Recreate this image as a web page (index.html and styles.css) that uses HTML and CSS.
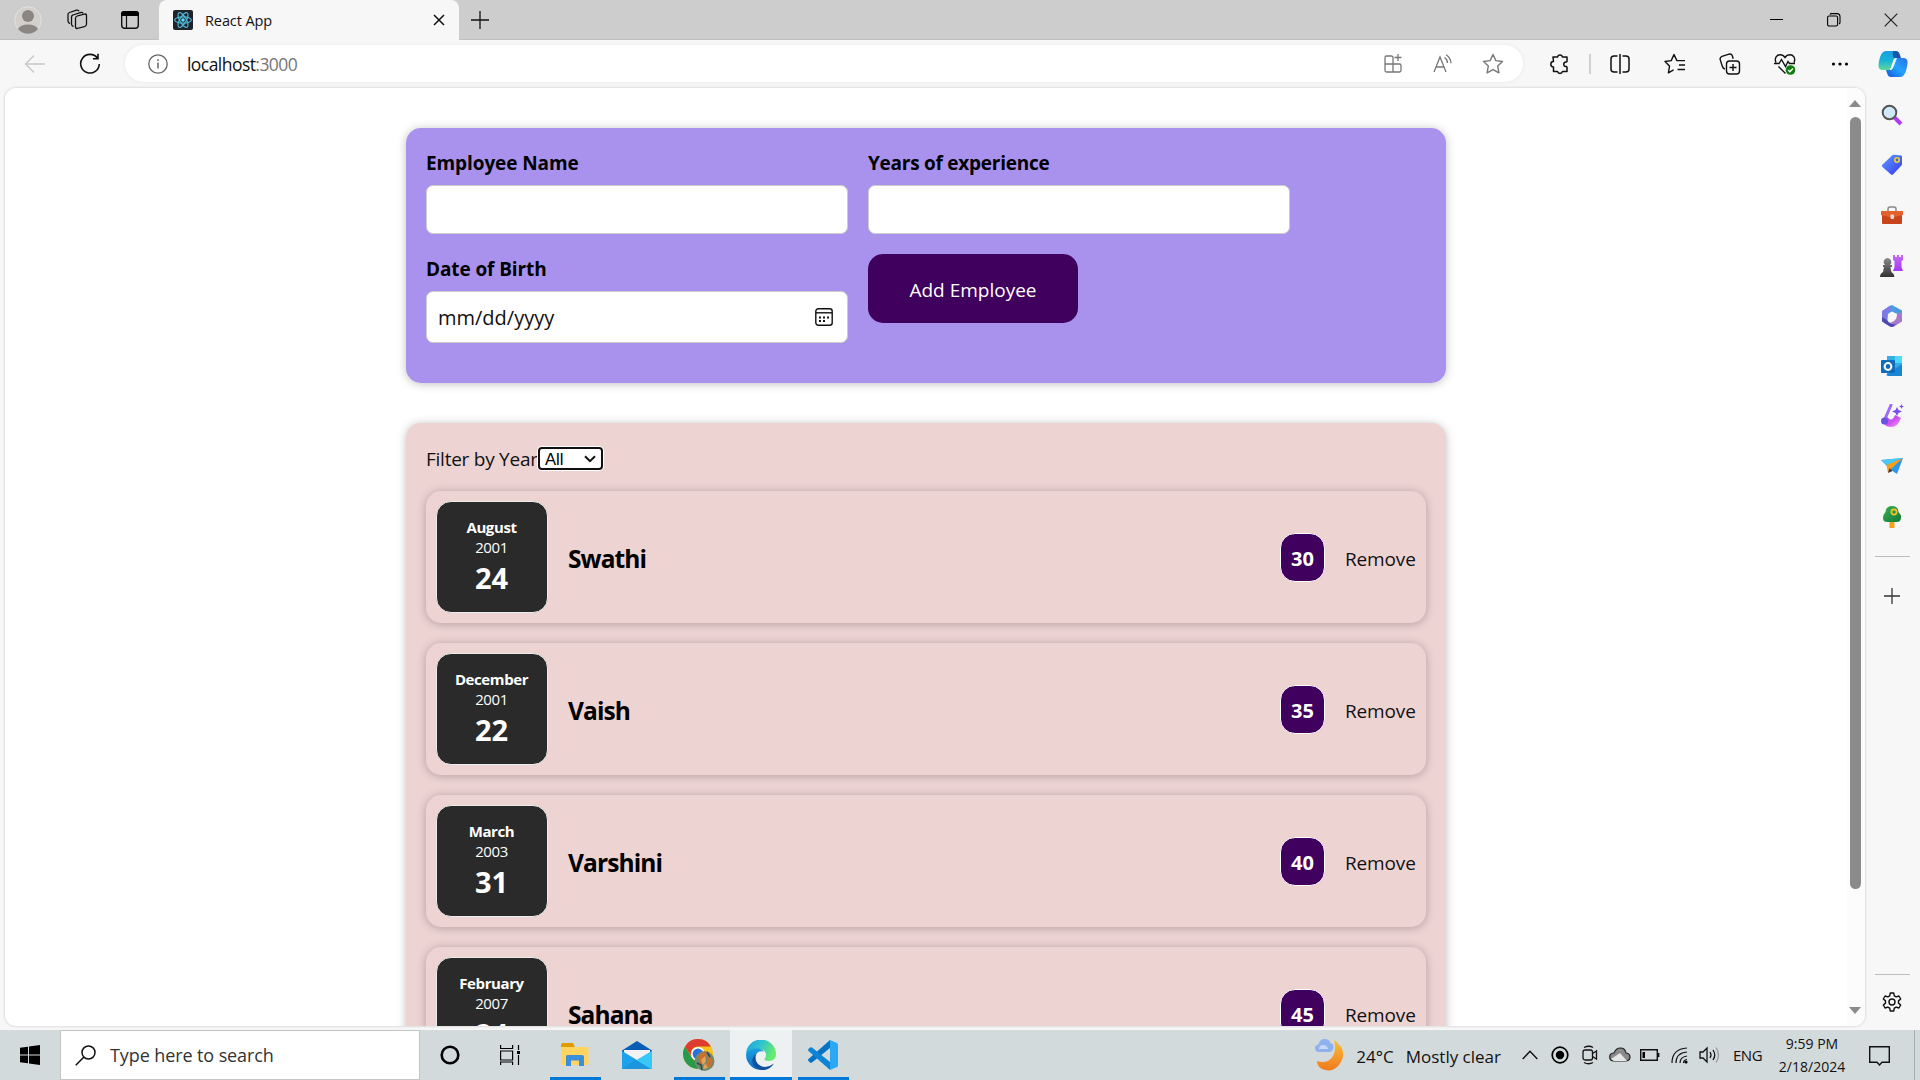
FILE: index.html
```html
<!DOCTYPE html>
<html lang="en">
<head>
<meta charset="utf-8">
<title>React App</title>
<link rel="stylesheet" href="styles.css">
</head>
<body>
<svg width="0" height="0" class="defs">
  <defs>
    <linearGradient id="copA" x1="0" y1="0" x2="0" y2="1"><stop offset="0" stop-color="#1b9de2"/><stop offset=".5" stop-color="#17b3d8"/><stop offset="1" stop-color="#5fd99a"/></linearGradient>
    <linearGradient id="copB" x1="1" y1="0" x2="0" y2="1"><stop offset="0" stop-color="#2a6fe0"/><stop offset=".5" stop-color="#22a4ff"/><stop offset="1" stop-color="#1552d8"/></linearGradient>
    <linearGradient id="tag" x1="0" y1="0" x2="1" y2="1"><stop offset="0" stop-color="#5aa2ff"/><stop offset="1" stop-color="#3a35f0"/></linearGradient>
    <linearGradient id="rook" x1="0" y1="0" x2="0" y2="1"><stop offset="0" stop-color="#c86bf5"/><stop offset="1" stop-color="#a43af5"/></linearGradient>
    <linearGradient id="pawn" x1="0" y1="0" x2="0" y2="1"><stop offset="0" stop-color="#8a8a8a"/><stop offset="1" stop-color="#333"/></linearGradient>
    <linearGradient id="drop" x1="0" y1="0" x2="1" y2="1"><stop offset="0" stop-color="#8a5cf5"/><stop offset=".5" stop-color="#cf4df0"/><stop offset="1" stop-color="#f0a5f5"/></linearGradient>
    <linearGradient id="moon" x1="0" y1="0" x2="0" y2="1"><stop offset="0" stop-color="#f8c13a"/><stop offset="1" stop-color="#f07a1e"/></linearGradient>
    <linearGradient id="edgeT" x1="0" y1="0" x2="1" y2=".4"><stop offset="0" stop-color="#1b9de2"/><stop offset=".5" stop-color="#2fc3d0"/><stop offset="1" stop-color="#66eb6e"/></linearGradient>
    <linearGradient id="edgeL" x1="0" y1="0" x2="0" y2="1"><stop offset="0" stop-color="#1aa0e0"/><stop offset="1" stop-color="#1169c4"/></linearGradient>
    <linearGradient id="tree" x1="0" y1="0" x2="1" y2="1"><stop offset="0" stop-color="#3fae4d"/><stop offset="1" stop-color="#0d7a3a"/></linearGradient>
  </defs>
</svg>

<header class="titlebar">
  <div class="tb-left">
    <span class="cell c56"><svg width="28" height="28"><circle cx="14" cy="14" r="13.2" fill="#d3d0cc" stroke="#e4e2de"/><circle cx="14" cy="10" r="6" fill="#8b8682"/><path d="M4 23a10.5 6.500 0 0 1 20 0 13 13 0 0 1-20 0z" fill="#8b8682"/></svg></span>
    <span class="cell c42"><svg width="24" height="24" fill="none" stroke="#111" stroke-width="1.300"><rect x="10.500" y="7" width="11" height="12.500" rx="2" transform="skewY(-14) translate(0 4)"/><path d="M8.500 18.500Q6.500 18 6.500 16V9Q6.500 7.400 8 7l8-2.500q1.700-.4 2.200 1M5 15.500Q3 15 3 13V6.500Q3 5 4.500 4.500l7-2.300q2-.5 2.500 1"/></svg></span>
    <span class="cell c64"><svg width="20" height="20"><rect x="1.700" y="1.700" width="16.600" height="16.600" rx="3" fill="none" stroke="#111" stroke-width="1.400"/><path d="M1 6V4a3 3 0 0 1 3-3h12a3 3 0 0 1 3 3v2z" fill="#000"/><path d="M6.500 6v12" stroke="#111" stroke-width="1.200"/></svg></span>
  </div>
  <div class="tab">
    <svg class="favicon" width="20" height="20"><rect width="20" height="20" rx="2" fill="#20232a"/><g fill="none" stroke="#4fb6d3" stroke-width="1.200"><ellipse cx="10" cy="10" rx="8.300" ry="3.200"/><ellipse cx="10" cy="10" rx="8.300" ry="3.200" transform="rotate(60 10 10)"/><ellipse cx="10" cy="10" rx="8.300" ry="3.200" transform="rotate(120 10 10)"/></g><circle cx="10" cy="10" r="1.800" fill="#61dafb"/></svg>
    <span class="tab-title">React App</span>
    <svg class="tab-close" width="12" height="12" stroke="#111" stroke-width="1.500"><path d="M1 1l10 10M11 1L1 11"/></svg>
  </div>
  <span class="cell c42"><svg width="18" height="18" stroke="#111" stroke-width="1.300"><path d="M9 0v18M0 9h18"/></svg></span>
  <div class="grow"></div>
  <div class="window-buttons">
  <span class="cell c57"><svg width="14" height="14"><path d="M0 6.500h13" stroke="#000"/></svg></span>
  <span class="cell c57"><svg width="14" height="14" fill="none" stroke="#000" stroke-width="1.100"><rect x=".6" y="3" width="10" height="10" rx="1.500"/><path d="M3 1.500Q3.300.6 4.500.6h5.500q3 0 3 3V9.500q0 1-1 1.500"/></svg></span>
  <span class="cell c57"><svg width="14" height="14" stroke="#222" stroke-width="1.200"><path d="M.7.700l12.600 12.600M13.300.7L.7 13.300"/></svg></span>
  </div>
</header>

<nav class="toolbar">
  <span class="cell c70"><svg width="22" height="20" fill="none" stroke="#c8c8c8" stroke-width="1.300"><path d="M21 10H1.500M10 1.500L1.500 10l8.500 8.500"/></svg></span>
  <span class="cell c40"><svg width="22" height="22" fill="none" stroke="#111" stroke-width="1.600"><path d="M18.500 5.200A9.300 9.300 0 1 0 20.300 11M19 .8v5h-5"/></svg></span>
  <div class="address">
    <svg class="info" width="20" height="20" fill="none" stroke="#666"><circle cx="10" cy="10" r="9.200" stroke-width="1.300"/><path d="M10 8.500v6M10 5.200v1.700" stroke-width="1.500"/></svg>
    <span class="url">localhost<span class="port">:3000</span></span>
    <div class="grow"></div>
    <span class="cell c50"><svg width="20" height="20" fill="none" stroke="#777" stroke-width="1.300"><path d="M10 10V3.500a1.500 1.500 0 0 0-1.500-1.500h-5A1.500 1.500 0 0 0 2 3.500v13A1.500 1.500 0 0 0 3.500 18h13a1.500 1.500 0 0 0 1.500-1.500v-5a1.500 1.500 0 0 0-1.500-1.500H2M10 10v8M15 0v7M11.500 3.500h7"/></svg></span>
    <span class="cell c50"><svg width="20" height="20" fill="none" stroke="#777" stroke-width="1.300"><path d="M1 18L7 3l6 15M3.200 13h7.600M11.500 3.500q3 2 3 5.500M13 .8q4.800 3 5 8.400"/></svg></span>
    <span class="cell c50"><svg width="22" height="22" fill="none" stroke="#777" stroke-width="1.400" stroke-linejoin="round"><path d="M11 1.500l2.900 6.100 6.600.9-4.800 4.600 1.200 6.700L11 16.600l-5.900 3.200 1.200-6.700L1.500 8.500l6.600-.9z"/></svg></span>
  </div>
  <span class="cell c56 after"><svg width="20" height="22" fill="none" stroke="#111" stroke-width="1.500" stroke-linejoin="round"><path d="M3 4h4.500a2.600 2.600 0 0 1 5 0H17v4.500a1 1 0 0 1-1 .5 2.200 2.200 0 0 0 0 4.500 1 1 0 0 1 1 .5v4.500h-4.500a2.600 2.600 0 0 1-5 0H3.500V14a2.700 2.700 0 0 1 0-5.400z"/></svg></span>
  <span class="sep"></span>
  <span class="cell c55"><svg width="20" height="20" fill="none" stroke="#111" stroke-width="1.500"><path d="M7.500 2H4Q1 2 1 5v10q0 3 3 3h3.500M12.500 2H16q3 0 3 3v10q0 3-3 3h-3.500M10 0v20"/></svg></span>
  <span class="cell c55"><svg width="22" height="22" fill="none" stroke="#111" stroke-width="1.400" stroke-linejoin="round"><path d="M13 7.600h8M15 12h6M13.500 16.500H21M14.500 7.600h-1.600L10 1.500 7.200 7.600l-6.200.9 4.500 4.600-1.100 6.700 5.200-3"/></svg></span>
  <span class="cell c55"><svg width="22" height="22" fill="none" stroke="#111" stroke-width="1.400"><rect x="7.500" y="8" width="13" height="13" rx="3"/><path d="M14 11v7M10.500 14.500h7M6 16Q4 15.500 3.400 13.500L1.200 6.600Q.7 4.200 3 3.400L10 1.200q2.500-.6 3.300 1.600l.9 3"/></svg></span>
  <span class="cell c55"><svg width="22" height="22" fill="none" stroke="#111" stroke-width="1.400"><path d="M2 9.500C0 5 3 1.800 6 1.800c2.500 0 4 1.200 5 2.700 1-1.500 2.500-2.700 5-2.700 3 0 6 3.200 4 7.700M0 10.500h5l2.500-4 4 7 2.500-5 1.500 2H21M4.500 13.500l7 7"/><circle cx="16.500" cy="17" r="4.800" fill="#107c10" stroke="none"/><path d="M14.200 17l1.700 1.700 3-3.200" stroke="#fff"/></svg></span>
  <span class="cell c55"><svg width="18" height="6"><circle cx="2.500" cy="3" r="1.600"/><circle cx="9" cy="3" r="1.600"/><circle cx="15.500" cy="3" r="1.600"/></svg></span>
  <span class="cell c52"><svg width="30" height="28"><path d="M8 1h9q3 0 4 4l1 3h-5L12 20H5q-5 0-4.500-5Q2 1 8 1z" fill="url(#copA)"/><path d="M15 1h3q3 0 4 4l1 3h-6q-3 0-2-7z" fill="#1555b0"/><path d="M22 27h-9q-3 0-4-4l-1-3h5L18 8h7q5 0 4.500 5Q28 27 22 27z" fill="url(#copB)"/><path d="M16 9q1-1 3-1l-4 10q-.8 2-2.800 2L14 14z" fill="#f4fbff"/></svg></span>
</nav>

<div class="middle">
  <div class="viewport">
    <main class="page">
      <form class="form card">
        <div class="field"><label>Employee Name</label><div class="input"></div></div>
        <div class="field"><label class="years">Years of experience</label><div class="input"></div></div>
        <div class="field"><label>Date of Birth</label><div class="input date"><span>mm/dd/yyyy</span><svg width="18" height="18" fill="none" stroke="#111" stroke-width="1.400"><rect x=".8" y=".8" width="16.400" height="16.400" rx="2.500"/><path d="M1 4.800h16"/><path d="M4 9.500h2M8 9.500h2M12 9.500h2M4 13h2M8 13h2" stroke-width="2"/></svg></div></div>
        <div class="field"><button type="button" class="add">Add Employee</button></div>
      </form>
      <section class="list card">
        <div class="filter"><span class="caption">Filter by Year</span><div class="select"><span>All</span><svg width="12" height="8" fill="none" stroke="#111" stroke-width="2"><path d="M1 1.200l5 5 5-5"/></svg></div></div>
        <article class="item"><div class="dob"><b>August</b><span>2001</span><strong>24</strong></div><h2>Swathi</h2><div class="badge">30</div><a>Remove</a></article>
        <article class="item"><div class="dob"><b>December</b><span>2001</span><strong>22</strong></div><h2>Vaish</h2><div class="badge">35</div><a>Remove</a></article>
        <article class="item"><div class="dob"><b>March</b><span>2003</span><strong>31</strong></div><h2>Varshini</h2><div class="badge">40</div><a>Remove</a></article>
        <article class="item"><div class="dob"><b>February</b><span>2007</span><strong>24</strong></div><h2>Sahana</h2><div class="badge">45</div><a>Remove</a></article>
      </section>
    </main>
    <div class="scrollbar"><i class="up"></i><i class="thumb"></i><i class="down"></i></div>
  </div>
  <aside class="sidebar">
    <span class="tool"><svg width="22" height="22"><path d="M13 13l7 7" stroke="#b03ef0" stroke-width="4"/><circle cx="8.500" cy="8.500" r="6.800" fill="#cfe9fb" stroke="#555" stroke-width="2"/></svg></span>
    <span class="tool"><svg width="22" height="22"><path d="M1 11L11 1.500q1-.8 2-.7l7 .7q1 .1 1 1.200V10q0 1-.8 1.800L12 20.500q-1 .8-2 0L1.500 13q-1-1-.5-2z" fill="url(#tag)"/><circle cx="16" cy="6" r="2.200" fill="#4a60d0" stroke="#f5cf3a" stroke-width="1.600"/></svg></span>
    <span class="tool"><svg width="22" height="20"><path d="M7 6V4q0-2 2-2h4q2 0 2 2v2" fill="none" stroke="#888" stroke-width="1.500"/><rect x="1" y="8" width="20" height="11" rx="1" fill="#c8441c"/><path d="M0 6h22v4l-8 2H8l-8-2z" fill="#e4602c"/><rect x="9.500" y="9.500" width="3.500" height="4.500" rx="1" fill="#ddd"/></svg></span>
    <span class="tool"><svg width="24" height="24"><path d="M13 1h2v2h2V1h2v2h2V1h2v5l-1.500 1v6L23 17H13l1.500-4V7L13 6z" fill="url(#rook)"/><path d="M7.500 4a4 4 0 0 1 2.500 7h2v2h-1.500l.8 5q3 1.500 3 5H0q0-3.500 3-5l1-5H3v-2h2A4 4 0 0 1 7.500 4z" fill="url(#pawn)"/></svg></span>
    <span class="tool"><svg width="22" height="22"><path d="M11 0L21 5.500v5L14 8l-3-1-4 4-1 7-5-2V6.500L8.500 1z" fill="#4a9be0"/><path d="M1 6l7.500-5Q12 3 9 6q-3 2-3 5v7l-5-2z" fill="#7c7be8"/><path d="M21 7v9.500L13 21.500q-2 1-4 0L3 18q6 1 10-2 3-2 3-7z" fill="#a57acb"/><path d="M1 12v4.500L9 21.500q2 1 4-.5l2-2q-6 1-9-4z" fill="#4f4ab0"/><path d="M11 7l3.600 2v4L11 15l-3.600-2V9z" fill="#f7f7f7" stroke="#f7f7f7" stroke-linejoin="round"/></svg></span>
    <span class="tool"><svg width="22" height="22"><rect x="6" y="1" width="15" height="19" fill="#35aee8"/><path d="M14 1h7v7h-7z" fill="#50d9ff"/><path d="M5 20l16-11v12H7z" fill="#1a86d4"/><rect y="5" width="14" height="13" rx="1" fill="#0f6cbd"/><circle cx="7" cy="11.500" r="3.400" fill="none" stroke="#fff" stroke-width="2"/></svg></span>
    <span class="tool"><svg width="24" height="24"><path d="M3 15q0 8 8 8 7 0 10-9l-6-3q-2 5-5 4.500L6 12z" fill="url(#drop)"/><path d="M11 1L5 15" stroke="#a06cf5" stroke-width="3" stroke-linecap="round"/><circle cx="4.500" cy="17" r="3.500" fill="#6a52e0"/><path d="M17 3l1.500 3L22 7.500 18.500 9 17 12l-1.500-3-3.500-1.500L15.500 6zM21.500 0l.7 1.800 1.800.7-1.800.7-.7 1.800-.7-1.800-1.800-.7 1.800-.7z" fill="#7a4df0"/></svg></span>
    <span class="tool"><svg width="22" height="16"><path d="M0 2L22 0 16 16l-6-4z" fill="#2f96ea"/><path d="M0 2L22 0 6 7z" fill="#4cc8f5"/><path d="M5.500 7L22 0 11 10l-4 5z" fill="#f3a11c"/><path d="M7 15l1.500-5 3 3z" fill="#4a3a4a"/></svg></span>
    <span class="tool"><svg width="20" height="24"><rect x="7.500" y="15" width="5" height="8" fill="#f3a01c"/><path d="M10 1q6 0 6.500 6 3 3 2.500 6-.5 4-4 4H5q-4 0-4-4 0-3.500 2.500-6Q4 1 10 1z" fill="url(#tree)"/><circle cx="12" cy="7" r="2.600" fill="none" stroke="#f6c22a" stroke-width="1.700"/></svg></span>
    <hr>
    <span class="plus"><svg width="16" height="16" stroke="#333" stroke-width="1.300"><path d="M8 0v16M0 8h16"/></svg></span>
    <div class="grow"></div>
    <hr>
    <span class="gear"><svg width="22" height="22" fill="none" stroke="#111" stroke-width="1.400" stroke-linejoin="round"><path d="M9.300 1h3.400l.6 2.800 1.900 1.100 2.700-.9 1.800 3-2.200 1.900v2.200l2.200 1.900-1.800 3-2.700-.9-1.900 1.100-.6 2.800H9.300l-.6-2.800-1.900-1.100-2.700.9-1.800-3 2.200-1.900V8.900L2.300 7l1.800-3 2.700.9 1.900-1.100z"/><circle cx="11" cy="10" r="3"/></svg></span>
  </aside>
</div>

<footer class="taskbar">
  <span class="cell c60"><svg width="20" height="20"><path d="M0 2.800L8 1.700V9.500H0zM9 1.500L20 0v9.500H9zM0 10.500h8v7.800L0 17.200zM9 10.500h11V20L9 18.500z"/></svg></span>
  <div class="search"><svg width="21" height="21" fill="none" stroke="#111" stroke-width="1.500"><circle cx="13.500" cy="7.500" r="6.500"/><path d="M9 12L.7 20.300"/></svg><span>Type here to search</span></div>
  <span class="cell c60"><svg width="20" height="20"><circle cx="10" cy="10" r="8.300" fill="none" stroke="#000" stroke-width="2.600"/></svg></span>
  <span class="cell c60"><svg width="20" height="20" fill="none" stroke="#000" stroke-width="1.200"><path d="M.6 0v3.500h12V0M.6 6h12v9h-12zM.6 20v-3h12v3M18.500 0v5M18.500 10v10"/><rect x="17" y="6" width="3" height="3" fill="#000" stroke="none"/></svg></span>
  <span class="app first run"><svg width="28" height="24"><path d="M0 2q0-2 2-2h10l1.500 3v3H0z" fill="#e09b00"/><path d="M0 4h27.500v17q0 1-1 1H1q-1 0-1-1z" fill="#ffd461"/><path d="M5 23V13.500q0-1.500 1.500-1.500H21q2 0 2 1.500V23h-5v-5.500h-8V23z" fill="#3a8fd8"/></svg></span>
  <span class="app"><svg width="30" height="28"><path d="M0 9.500L15 0l15 9.500V12H0z" fill="#0a5db5"/><path d="M2 9h26v3L15 21 2 12z" fill="#f3f3f3"/><path d="M0 10l30 18H0z" fill="#1da1ea"/><path d="M30 10L0 28h30z" fill="#2bb0ef"/><path d="M30 10L14 19.500 28 28h2z" fill="#37c8f8"/><path d="M0 28l14-9 15 9z" fill="#1c94de"/></svg></span>
  <span class="app run"><svg width="32" height="32"><circle cx="15" cy="15" r="15" fill="#fbc116"/><path d="M2 7.500A15 15 0 0 1 28 7.500H15a7 7 0 0 0-6.500 10z" fill="#dd3b30"/><path d="M2 7.500A15 15 0 0 0 14.500 30l6.500-11.500A7 7 0 0 1 8.500 18z" fill="#269a48"/><circle cx="15" cy="15" r="7" fill="#fff"/><circle cx="15" cy="15" r="5.400" fill="#2a6fe3"/><circle cx="21.500" cy="22" r="10" fill="#6f8a70"/><path d="M15 18q4-6 9-5l-1 7-6 6zM25 17l5 4-3 8-4-2z" fill="#c9702f"/><path d="M18 21l4-4 1 5-3 4zM22 24l3 5-5 1z" fill="#e6a35a"/><path d="M14 24l4 2 1 5M24 13l3 5" stroke="#2b4a4a" stroke-width="1.500" fill="none"/></svg></span>
  <span class="app active"><svg width="30" height="30"><path d="M0 15A15 15 0 0 1 30 14q0 7-7 7-5 0-4.500-2 1.500-1.500 1.500-4-.5-5.500-7-6Q4 8.500 0 15z" fill="url(#edgeT)"/><path d="M0 15Q2 8 11 8.500q5 .3 7 3-7-1.500-8.500 5Q9 25 20 29A15 15 0 0 1 0 15z" fill="url(#edgeL)"/><path d="M10 14q-3 9 6 12.500 6 1.500 12-3Q23 31 15 30 5 27 6.500 19 7.500 15.500 10 14z" fill="#10509f"/></svg></span>
  <span class="app run"><svg width="30" height="30"><path d="M22 0v8L4 22.500q-1 .7-2 0l-1.500-1.500q-1-1 0-2z" fill="#0873c4"/><path d="M22 30v-8L4 7.500q-1-.7-2 0L.5 9q-1 1 0 2z" fill="#0d85d4"/><path d="M22 0l7 3q1 .5 1 1.500v21q0 1-1 1.500l-7 3z" fill="#2aa8f4"/></svg></span>
  <div class="grow"></div>
  <svg class="weather" width="30" height="34"><path d="M19 2Q33 12 26 24q-7 12-19 7-5-3-5-8 12 4 17-7 2-6 0-14z" fill="url(#moon)"/><path d="M4 14q-4 0-4-4 0-3 3.500-3.500Q5 .5 10 1q4 0 5.500 4 3 .5 3 4T15 14z" fill="#8fb2ee"/><path d="M4 11q0-4 4-4t5 4z" fill="#c5d8fb"/></svg>
  <span class="temp">24°C</span><span class="cond">Mostly clear</span>
  <span class="cell c30 chev"><svg width="16" height="10" fill="none" stroke="#111" stroke-width="1.400"><path d="M.7 9L8 1.200 15.300 9"/></svg></span>
  <span class="cell c30"><svg width="18" height="18"><circle cx="9" cy="9" r="7.800" fill="none" stroke="#000" stroke-width="1.700"/><circle cx="9" cy="9" r="4.200"/></svg></span>
  <span class="cell c30"><svg width="16" height="20" fill="none" stroke="#111" stroke-width="1.300"><path d="M2 2.500q5-2.500 9 0M2 17.500q5 2.500 9 0"/><rect x="1" y="5" width="9.500" height="10" rx="2"/><path d="M10.500 8.500L14.500 6v8l-4-2.500"/></svg></span>
  <span class="cell c30"><svg width="22" height="16"><path d="M5 14q-4.300 0-4.300-4T5 6q2-5 6.500-5T17 6q4 .5 4 4t-4 4z" fill="#8a8a8a" stroke="#222" stroke-width="1.200"/><path d="M2 12l9-6 7 8H5z" fill="#e6e6e6"/></svg></span>
  <span class="cell c30"><svg width="20" height="12" fill="none" stroke="#111" stroke-width="1.400"><path d="M.7.700h16.600v10.600H.7zM18.700 4v4"/><path d="M2.500 3h2.500v6H2.500z" fill="#000" stroke="none"/></svg></span>
  <span class="cell c30"><svg width="18" height="18" fill="none" stroke="#111" stroke-width="1.200"><path d="M1 17Q1 3 16 2M5 17Q5 7 16 6M9 17q0-6 7-7M12.500 17q0-3 3.500-3.500"/><circle cx="15" cy="16" r="1.600" fill="#000" stroke="none"/></svg></span>
  <span class="cell c30"><svg width="22" height="18" fill="none" stroke="#111" stroke-width="1.300"><path d="M1 6h3l4-4v14l-4-4H1zM11 6q2 3 0 6M14 4q3.500 5 0 10"/><path d="M17 1.500q5 7.500 0 15" stroke="#999"/></svg></span>
  <span class="lang">ENG</span>
  <div class="clock"><span>9:59 PM</span><span>2/18/2024</span></div>
  <svg class="notif" width="21" height="20" fill="none" stroke="#111" stroke-width="1.400"><path d="M.7.700h19.600v15.600h-7.300L10.500 19 8 16.300H.7z"/></svg>
  <span class="peek"></span>
</footer>
</body>
</html>
```
FILE: styles.css
```css
* { box-sizing: border-box; }
body {
  margin: 0;
  width: 1920px;
  height: 1080px;
  overflow: hidden;
  display: flex;
  flex-direction: column;
  background: #f7f7f7;
  font-family: "Open Sans", "Noto Sans", sans-serif;
  color: #111;
}
.defs { position: absolute; }
svg { display: block; flex: none; }
.grow { flex: 1; }
.cell { display: flex; align-items: center; justify-content: center; flex: none; }
.c30 { width: 30px; } .c40 { width: 40px; } .c42 { width: 42px; } .c50 { width: 50px; }
.c52 { width: 52px; } .c55 { width: 55px; } .c56 { width: 56px; } .c57 { width: 57px; }
.c60 { width: 60px; } .c64 { width: 64px; } .c70 { width: 70px; }

.titlebar { display: flex; height: 40px; flex: none; background: #cdcdcd; box-shadow: inset 0 -1px #c0c0c0; }
.tb-left { display: flex; width: 159px; }
.tab { display: flex; align-items: center; width: 300px; background: #f7f7f7; border-radius: 8px 8px 0 0; padding: 0 14px; }
.tab-title { margin-left: 12px; font-size: 14.500px; line-height: 39px; letter-spacing: -.1px; }
.tab-close { margin-left: auto; }
.window-buttons { display: flex; padding-right: 1px; }

.toolbar { display: flex; align-items: center; height: 48px; padding-bottom: 1px; flex: none; }
.toolbar > .c40 { margin-right: 15px; }
.address { display: flex; align-items: center; width: 1398px; height: 37px; border-radius: 19px; background: #fff; padding: 0 5px 0 22px; box-shadow: 0 0 4px #e8e8e8; }
.info { margin-left: 1px; }
.url { margin-left: 19px; font-size: 17.500px; line-height: 36px; letter-spacing: -.55px; }
.port { color: #767676; }
.after { margin-left: 9px; margin-right: -1px; }
.sep { width: 2px; height: 20px; background: #d0d0d0; margin: 0 1px 0 2px; }

.middle { display: flex; height: 942px; flex: none; }
.viewport { display: flex; width: 1860px; height: 938px; margin-left: 5px; background: #fff; border-radius: 11px; overflow: hidden; box-shadow: 0 0 2px 1px #dedede; }
.page { width: 1842px; padding-top: 40px; }
.card { width: 1040px; margin: 0 auto 40px; border-radius: 15px; box-shadow: 0 1px 10px rgba(0,0,0,.25); }
.form { display: grid; grid-template-columns: 422px 422px; gap: 20px; align-content: start; height: 255px; padding: 20px; background: #a892ee; }
.field label { display: block; height: 37px; line-height: 31px; font-size: 19px; font-weight: 700; letter-spacing: -.1px; color: #000; }
.field .years { letter-spacing: -.25px; }
.input { height: 49px; background: #fff; border: 1px solid #ccc; border-radius: 7px; }
.date { display: flex; align-items: center; justify-content: space-between; height: 52px; padding: 0 14px 0 11px; font-size: 20px; }
.add { display: block; width: 210px; height: 69px; padding: 2px 0 0; border: 0; border-radius: 15px; background: #40005d; color: #fff; font: 400 19px "Open Sans", sans-serif; }
.list { height: 700px; padding: 20px; background: #eed3d3; }
.filter { display: flex; align-items: center; height: 31px; margin-bottom: 17px; font-size: 19px; letter-spacing: -.25px; }
.caption { width: 112px; white-space: nowrap; }
.select { display: flex; align-items: center; justify-content: space-between; width: 65px; height: 23px; padding: 0 5px; border: 2px solid #101010; border-radius: 4px; background: #fff; box-shadow: 0 0 0 1px #fff; font: 16.67px/19px "Liberation Sans", Arial, sans-serif; letter-spacing: 0; color: #000; }
.select span { padding-top: 2px; }
.item { display: flex; align-items: center; height: 132px; margin-bottom: 20px; padding: 0 10px; border-radius: 15px; box-shadow: 0 1px 10px rgba(0,0,0,.25); }
.dob { display: flex; flex-direction: column; align-items: center; width: 112px; height: 112px; padding: 15px 1px 0 0; border: 1px solid #ececec; border-radius: 15px; background: #2a2a2a; color: #fff; font-size: 15px; line-height: 20px; letter-spacing: -.4px; }
.dob strong { font-size: 29px; line-height: 41px; letter-spacing: 0; }
.item h2 { flex: 1; margin: 2px 0 0 20px; font-size: 24.500px; font-weight: 700; letter-spacing: -.9px; color: #000; }
.badge { width: 45px; height: 49px; margin-right: 20px; border: 1px solid #fff; border-radius: 15px; background: #40005d; color: #fff; font-weight: 700; font-size: 20px; line-height: 49px; text-align: center; }
.item a { width: 71px; padding-top: 3px; font-size: 19px; letter-spacing: -.15px; }
.scrollbar { display: flex; flex-direction: column; align-items: center; width: 18px; background: #fcfcfc; padding: 12px 2px 12px 0; }
.up { border: 6.500px solid transparent; border-top: 0; border-bottom: 7px solid #8b8b8b; }
.down { border: 6.500px solid transparent; border-bottom: 0; border-top: 7px solid #8b8b8b; margin-top: auto; }
.thumb { width: 11px; height: 772px; margin-top: 10px; border-radius: 6px; background: #8b8b8b; }

.sidebar { display: flex; flex-direction: column; align-items: center; width: 55px; padding: 2px 1px 4px 0; }
.tool { display: flex; align-items: center; justify-content: center; height: 50.200px; }
.sidebar hr { width: 35px; height: 1px; margin: 14px 0 0; border: 0; background: #bdbdbd; }
.plus { display: flex; margin-top: 31px; }
.gear { display: flex; margin: 17px 0 12px; }

.taskbar { display: flex; align-items: center; height: 50px; flex: none; background: #d3dadb; }
.search { display: flex; align-items: center; width: 360px; height: 50px; padding-left: 14px; background: #fff; border: 1px solid #c4c4c4; font-size: 18px; letter-spacing: -.1px; color: #333; }
.search span { margin-left: 14px; }
.app { display: flex; align-items: center; justify-content: center; width: 62px; height: 50px; border-bottom: 3px solid transparent; padding-top: 2px; }
.first { margin-left: 4px; }
.run { background: linear-gradient(#0078d7,#0078d7) center bottom / 51px 3px no-repeat border-box; }
.active { background: #eef1f1; border-bottom-color: #0078d7; }
.temp { margin: 3px 0 0 11px; font-size: 17px; }
.cond { margin: 3px 0 0 12px; font-size: 17px; }
.chev { margin-left: 14px; }
.lang { width: 29px; font-size: 15px; margin-left: 8px; letter-spacing: -.5px; }
.clock { display: flex; flex-direction: column; align-items: center; width: 70px; margin-left: 15px; font-size: 14px; line-height: 23px; }
.notif { margin: 2px 0 0 22px; }
.peek { width: 1px; height: 50px; margin: 0 5px 0 24px; background: #a4abad; }
```
